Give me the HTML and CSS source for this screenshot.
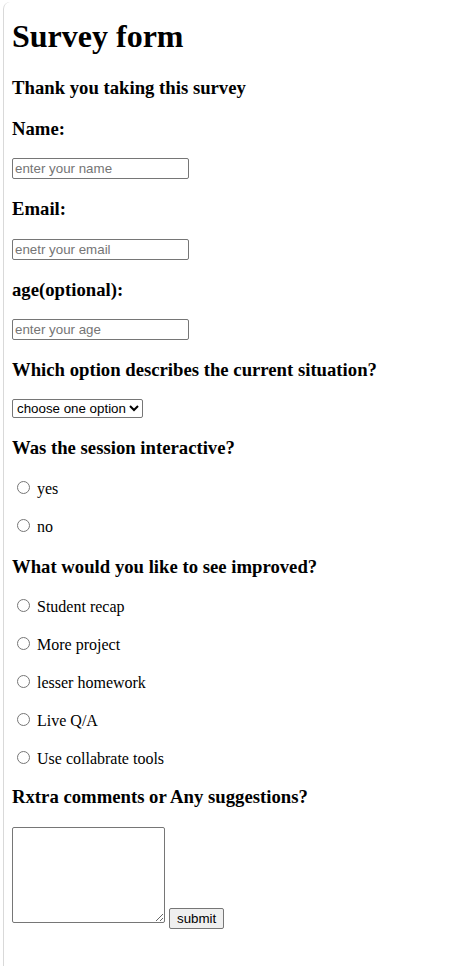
FILE: index.html
```html
<!DOCTYPE html>
<html>
<head>
<meta charset="utf-8">
<link rel="stylesheet" href="styles.css">
</head>
<body>
<div class="frame">
  <h1 class="title">Survey form</h1>
  <h3 class="q">Thank you taking this survey</h3>
  <form class="form">
    <h3 class="q">Name:</h3>
    <input class="field" type="text" placeholder="enter your name">
    <h3 class="q">Email:</h3>
    <input class="field" type="email" placeholder="enetr your email">
    <h3 class="q">age(optional):</h3>
    <input class="field" type="number" placeholder="enter your age">
    <h3 class="q">Which option describes the current situation?</h3>
    <div class="row row-sel">
      <select class="sel">
        <option>choose one option</option>
        <option>Student</option>
        <option>Working</option>
      </select>
    </div>
    <h3 class="q">Was the session interactive?</h3>
    <p class="opt"><input type="radio" name="inter"> yes</p>
    <p class="opt"><input type="radio" name="inter"> no</p>
    <h3 class="q q-improve">What would you like to see improved?</h3>
    <p class="opt"><input type="radio" name="imp"> Student recap</p>
    <p class="opt"><input type="radio" name="imp"> More project</p>
    <p class="opt"><input type="radio" name="imp"> lesser homework</p>
    <p class="opt"><input type="radio" name="imp"> Live Q/A</p>
    <p class="opt"><input type="radio" name="imp"> Use collabrate tools</p>
    <h3 class="q q-tight">Rxtra comments or Any suggestions?</h3>
    <div class="row"><textarea class="comments"></textarea> <button class="btn" type="submit">submit</button></div>
  </form>
</div>
</body>
</html>
```
FILE: styles.css
```css
html, body {
  margin: 0;
  padding: 0;
  background: #ffffff;
}
body {
  font-family: "Liberation Serif", "Times New Roman", serif;
  font-size: 16px;
  color: #000;
}
.frame {
  margin-left: 3px;
  margin-top: 2px;
  border-left: 1px solid #d9d9d9;
  border-top-left-radius: 7px;
  padding: 1px 8px 0 8px;
  min-height: 964px;
  box-sizing: border-box;
}
.title {
  font-size: 32px;
  font-weight: bold;
  margin: 15px 0 22px;
}
.q {
  font-size: 18.72px;
  font-weight: bold;
  margin: 18.72px 0;
}
.q-improve {
  margin-top: 17.72px;
  margin-bottom: 17.72px;
}
.q-tight {
  margin-top: 16.72px;
}
.form {
  margin: 0;
}
.field {
  display: block;
  font-family: "Liberation Sans", Arial, sans-serif;
  font-size: 13.33px;
  width: 177px;
  height: 21px;
  box-sizing: border-box;
  padding: 1px 2px;
  border: 1px solid #767676;
  border-radius: 2px;
  margin: 0;
}
.field::placeholder {
  color: #757575;
}
.row {
  margin: 0;
}
.row-sel {
  margin-top: -1px;
  padding-bottom: 1px;
}
.sel {
  font-family: "Liberation Sans", Arial, sans-serif;
  font-size: 13.33px;
  height: 19px;
  width: 131px;
  border: 1px solid #767676;
  border-radius: 2px;
  padding: 0;
  margin: 0;
  background: #fff;
  color: #000;
}
.opt {
  margin: 16px 0;
  height: 22px;
  line-height: 22px;
}
.opt input {
  margin: 3px 3px 0 5px;
}
.comments {
  width: 153px;
  height: 96px;
  box-sizing: border-box;
  border: 1px solid #767676;
  border-radius: 2px;
  margin: 0;
  vertical-align: baseline;
}
.btn {
  font-family: "Liberation Sans", Arial, sans-serif;
  font-size: 13.33px;
  margin: 0;
  padding: 1px 7px;
  height: 21px;
  border: 1px solid #767676;
  border-radius: 2px;
  background: #efefef;
  color: #000;
}
```
